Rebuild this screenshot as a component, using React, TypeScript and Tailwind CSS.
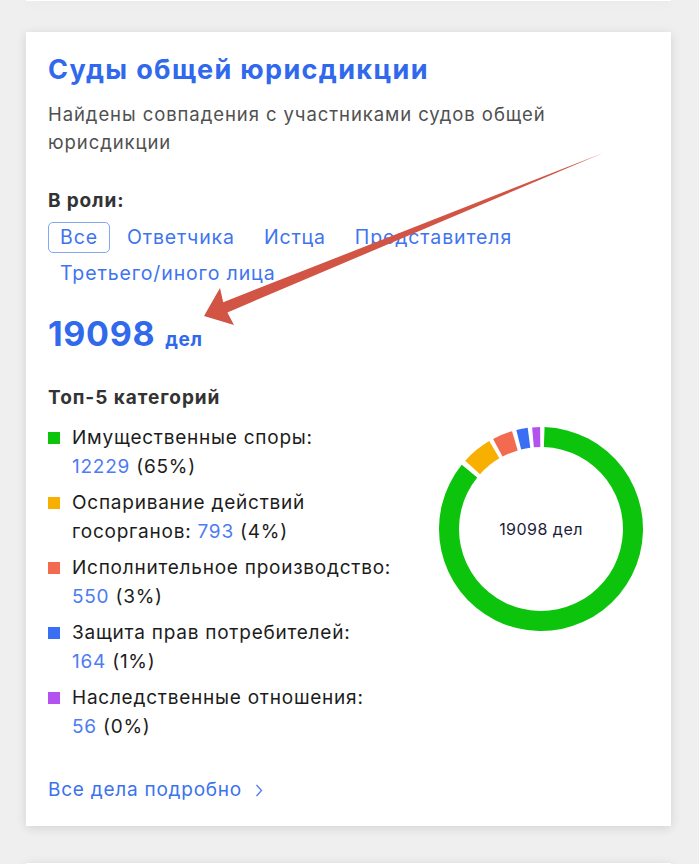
import React from "react";

type Category = {
  label: string;
  count: number;
  pct: string;
  color: string;
  from: number;
  to: number;
};

const categories: Category[] = [
  { label: "Имущественные споры:", count: 12229, pct: "65%", color: "#0cc40c", from: 2, to: 309 },
  { label: "Оспаривание действий госорганов:", count: 793, pct: "4%", color: "#f8b000", from: 312, to: 329.5 },
  { label: "Исполнительное производство:", count: 550, pct: "3%", color: "#f26b50", from: 332, to: 343.5 },
  { label: "Защита прав потребителей:", count: 164, pct: "1%", color: "#3a6ff5", from: 346, to: 352.5 },
  { label: "Наследственные отношения:", count: 56, pct: "0%", color: "#b452f0", from: 355, to: 359.5 },
];

const roles = ["Все", "Ответчика", "Истца", "Представителя", "Третьего/иного лица"];

function polar(cx: number, cy: number, r: number, deg: number) {
  const a = ((deg - 90) * Math.PI) / 180;
  return [cx + r * Math.cos(a), cy + r * Math.sin(a)];
}

function arcPath(cx: number, cy: number, rOut: number, rIn: number, from: number, to: number) {
  const large = to - from > 180 ? 1 : 0;
  const [x1, y1] = polar(cx, cy, rOut, from);
  const [x2, y2] = polar(cx, cy, rOut, to);
  const [x3, y3] = polar(cx, cy, rIn, to);
  const [x4, y4] = polar(cx, cy, rIn, from);
  return `M${x1} ${y1} A${rOut} ${rOut} 0 ${large} 1 ${x2} ${y2} L${x3} ${y3} A${rIn} ${rIn} 0 ${large} 0 ${x4} ${y4} Z`;
}

function Donut() {
  const size = 206;
  const c = size / 2;
  return (
    <div className="relative w-[206px] h-[206px] shrink-0">
      <svg width={size} height={size} viewBox={`0 0 ${size} ${size}`}>
        {categories.map((cat) => (
          <path key={cat.label} d={arcPath(c, c, 102, 82, cat.from, cat.to)} fill={cat.color} />
        ))}
      </svg>
      <div className="absolute inset-0 flex items-center justify-center text-[16px] tracking-[0.03em] text-[#1d1d3b]">
        19098 дел
      </div>
    </div>
  );
}

function Arrow() {
  // red annotation arrow drawn over the card
  return (
    <svg
      className="absolute left-0 top-0 pointer-events-none"
      width="699"
      height="864"
      viewBox="0 0 699 864"
    >
      <polygon
        points="603,153 227.4,312.4 234,325 204,316 220,288 223.2,302.2"
        fill="#d15445"
      />
    </svg>
  );
}

export default function App() {
  return (
    <div className="relative w-[699px] h-[864px] overflow-hidden bg-[#efefef] font-['Inter',sans-serif]">
      {/* previous card, only its lower edge shows */}
      <div className="mx-[26px] w-[645px] h-px bg-white shadow-[0_2px_10px_rgba(0,0,0,0.14)]" />

      <div className="mt-[31px] mx-[26px] w-[645px] h-[794px] bg-white shadow-[0_2px_10px_rgba(0,0,0,0.12)] px-[22px] pt-[22px]">
        <h2 className="text-[27px] leading-[32px] font-bold text-[#3069eb] tracking-[0.05em]">
          Суды общей юрисдикции
        </h2>
        <p className="mt-[14px] max-w-[550px] text-[18.5px] leading-[28px] tracking-[0.05em] text-[#505050]">
          Найдены совпадения с участниками судов общей юрисдикции
        </p>

        <div className="mt-[33px] text-[19px] leading-[24px] font-bold tracking-[0.045em] text-[#333]">В роли:</div>
        <div className="mt-[9px] flex flex-wrap gap-x-[5px] gap-y-[5px]">
          {roles.map((r, i) => (
            <span
              key={r}
              className={
                i === 0
                  ? "h-[31px] px-[11px] flex items-center rounded-[5px] border border-[#84a6f3] text-[19.5px] tracking-[0.045em] text-[#3f74ef]"
                  : "h-[31px] px-[11px] flex items-center rounded-[5px] border border-transparent text-[19.5px] tracking-[0.045em] text-[#3f74ef]"
              }
            >
              {r}
            </span>
          ))}
        </div>

        <div className="mt-[27px] flex items-baseline gap-[10px] leading-[36px]">
          <span className="text-[34px] font-bold tracking-[0.02em] text-[#3069eb]">19098</span>
          <span className="text-[19px] font-bold tracking-[0.03em] text-[#3069eb]">дел</span>
        </div>

        <div className="mt-[28px] text-[19px] leading-[24px] font-bold tracking-[0.05em] text-[#333]">Топ-5 категорий</div>

        <div className="mt-[13px] flex items-start">
          <ul className="w-[350px] flex flex-col gap-[7px]">
            {categories.map((cat) => (
              <li key={cat.label} className="flex items-start gap-[12px] text-[19px] leading-[29px] tracking-[0.04em] text-[#1c1c1c]">
                <span className="mt-[9px] w-[12px] h-[12px] shrink-0" style={{ backgroundColor: cat.color }} />
                <span>
                  {cat.label}{" "}
                  <span className="whitespace-nowrap">
                    <span className="text-[#4d7cf3]">{cat.count}</span> ({cat.pct})
                  </span>
                </span>
              </li>
            ))}
          </ul>
          <div className="ml-auto mr-[5px] mt-[3px]">
            <Donut />
          </div>
        </div>

        <div className="mt-[37px] flex items-center gap-[13px] text-[19px] leading-[24px] tracking-[0.04em] text-[#3b72ee]">
          <span>Все дела подробно</span>
          <svg width="8" height="13" viewBox="0 0 8 13" fill="none">
            <path d="M1.5 1 L6.5 6.5 L1.5 12" stroke="#4d7cf3" strokeWidth="1.3" />
          </svg>
        </div>
      </div>

      {/* next card, top edge */}
      <div className="mt-[37px] mx-[26px] w-[645px] h-[40px] bg-white shadow-[0_2px_10px_rgba(0,0,0,0.12)]" />

      <Arrow />
    </div>
  );
}
